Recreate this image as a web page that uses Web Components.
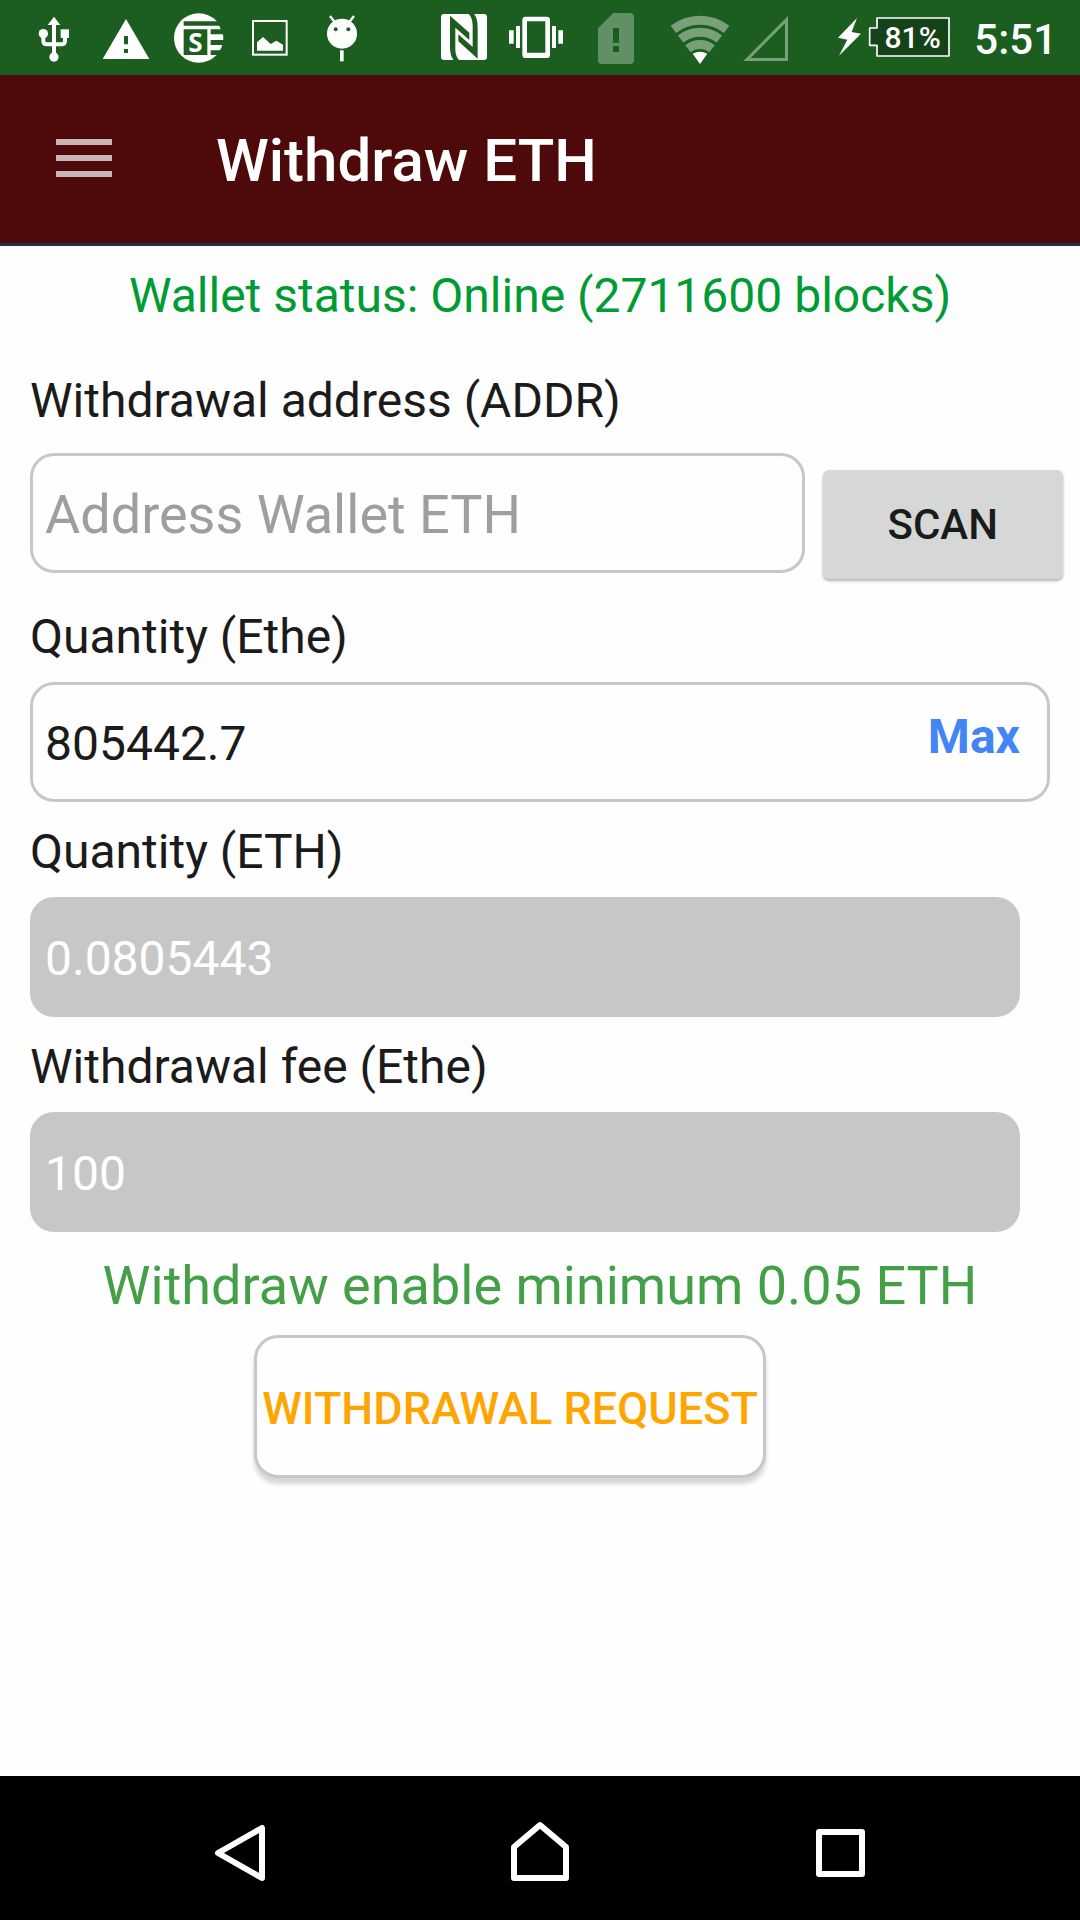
<!DOCTYPE html>
<html lang="en">
<head>
<meta charset="utf-8">
<meta name="viewport" content="width=device-width, initial-scale=1">
<title>Withdraw ETH</title>
<style>
  body {
    margin: 0;
    font-family: Roboto, "Liberation Sans", sans-serif;
    color: #1b1b1b;
    background: #fefefe;
  }
</style>
</head>
<body>
<withdraw-screen></withdraw-screen>

<script>
const GREEN = '#1b5e20';

// status bar glyphs, drawn at three units per pixel; w is the slot width in pixels
const ICONS = {
  usb: {w: 72, body: `
    <path d="M108 50L127 75H89Z"/><circle cx="108" cy="171" r="14"/><circle cx="76" cy="101" r="14"/>
    <rect x="128" y="88" width="25" height="26"/>
    <path d="M108 70V165M76 101V122Q76 133 87 133H130Q141 133 141 122V110" fill="none" stroke="#fff" stroke-width="12"/>`},
  warning: {w: 72, body: `
    <path d="M108 57L178 177H38Z"/>
    <path d="M102 108h12v25h-12zM102 147h12v12h-12z" fill="${GREEN}"/>`},
  news: {w: 72, body: `
    <circle cx="110" cy="114" r="74"/>
    <path d="M65 64H190V77H65ZM65 88H136V165H65ZM146 88H190V103H146ZM146 120H190V135H146ZM146 151H190V165H146ZM172 77H190V88H176Z" fill="${GREEN}"/>
    <text x="100" y="155" font-family="Noto Sans, sans-serif" font-weight="700" font-size="78" text-anchor="middle">S</text>`},
  image: {w: 72, body: `
    <rect x="57" y="63" width="101" height="101" fill="none" stroke="#fff" stroke-width="6"/>
    <path d="M69 127L87 111L110 132L127 122L147 134V152H69Z"/>`},
  android: {w: 72, body: `
    <circle cx="108" cy="101" r="45"/><rect x="102" y="151" width="11" height="33"/>
    <path d="M72 48L86 66M144 48L130 66" stroke="#fff" stroke-width="7"/>
    <g fill="${GREEN}"><circle cx="89" cy="88" r="6"/><circle cx="127" cy="88" r="6"/></g>`},
  nfc: {w: 72, body: `
    <rect x="39" y="42" width="138" height="138" rx="9"/>
    <path d="M66 47L124 98V120L82 83V150Q83 170 93 180H77Q66 168 66 140ZM149 176L91 124V103L134 141V75Q133 52 122 42H138Q149 52 149 85Z" fill="${GREEN}"/>`},
  vibrate: {w: 80, body: `
    <path fill-rule="evenodd" d="M77 50H140Q150 50 150 60V164Q150 174 140 174H77Q67 174 67 164V60Q67 50 77 50ZM81 64V158H136V64Z"/>
    <path d="M48 78h12v66h-12zM27 91h14v40h-14zM156 78h12v66h-12zM175 91h14v40h-14z"/>`},
  sim: {w: 84, body: `
    <path fill="#619066" fill-rule="evenodd" d="M100 39H150Q162 39 162 51V180Q162 192 150 192H66Q54 192 54 180V85ZM99 84V128H117V84ZM99 138V156H117V138Z"/>`},
  wifi: {w: 72, body: `
    <g fill="none" stroke="#799f7b" stroke-width="27">
      <path d="M28 88A131 131 0 0 1 188 88M50 117A94 94 0 0 1 166 117M72 146A58 58 0 0 1 144 146"/>
    </g>
    <path d="M108 192L86 161Q108 149 130 161Z"/>`},
  signal: {w: 96, body: `
    <path fill="#799f7b" fill-rule="evenodd" d="M156 48V183H22ZM147 70L44 174H147Z"/>`},
  bolt: {w: 36, body: '<path d="M75 54L18 113L46 119L21 167L87 101L59 96Z"/>'},
  battery: {w: 106, body: `
    <path d="M27 54H243V168H27V136H5V84H27Z" fill="#164219" stroke="#fff" stroke-width="5" stroke-linejoin="round"/>
    <text x="134" y="143" font-family="Roboto, sans-serif" font-weight="500" font-size="90" text-anchor="middle">81%</text>`}
};

/**
 * @class StatusIcon
 */
class StatusIcon extends HTMLElement {
  connectedCallback () {
    const icon = ICONS[this.getAttribute('name')];
    const shadow = this.shadowRoot || this.attachShadow({mode: 'open'});
    shadow.innerHTML = `
      <style>
        :host { display: block; flex: none; }
        svg { display: block; fill: #fff; }
      </style>
      <svg width="${icon.w}" height="75" viewBox="0 0 ${icon.w * 3} 225">${icon.body}</svg>
    `;
  }
}
customElements.define('status-icon', StatusIcon);

/**
 * @class StatusBar
 */
class StatusBar extends HTMLElement {
  constructor () {
    super();
    this.attachShadow({mode: 'open'}).innerHTML = `
      <style>
        :host {
          display: flex;
          justify-content: space-between;
          padding: 0 23px 0 18px;
          background: ${GREEN};
          color: #fff;
        }
        div { display: flex; align-items: center; }
        time { padding-top: 4px; font-size: 42px; font-weight: 500; line-height: 50px; }
      </style>
      <div>
        <status-icon name="usb"></status-icon>
        <status-icon name="warning"></status-icon>
        <status-icon name="news"></status-icon>
        <status-icon name="image"></status-icon>
        <status-icon name="android"></status-icon>
      </div>
      <div>
        <status-icon name="nfc"></status-icon>
        <status-icon name="vibrate"></status-icon>
        <status-icon name="sim"></status-icon>
        <status-icon name="wifi"></status-icon>
        <status-icon name="signal"></status-icon>
        <status-icon name="bolt"></status-icon>
        <status-icon name="battery"></status-icon>
        <time>5:51</time>
      </div>
    `;
  }
}
customElements.define('status-bar', StatusBar);

/**
 * @class AppBar
 */
class AppBar extends HTMLElement {
  constructor () {
    super();
    this.attachShadow({mode: 'open'}).innerHTML = `
      <style>
        :host {
          display: flex;
          align-items: center;
          gap: 80px;
          padding: 44px 32px 46px;
          background: #4e0a0a;
          border-bottom: 3px solid #1f2f3f;
          color: #fff;
        }
        button {
          display: block;
          padding: 0 24px;
          border: 0;
          background: none;
          cursor: pointer;
        }
        svg { display: block; fill: #c9b5b5; }
        h1 { margin: 0; padding-top: 6px; font-size: 60px; font-weight: 500; line-height: 72px; }
      </style>
      <button type="button" aria-label="Open menu">
        <svg width="56" height="38" viewBox="0 0 56 38"><path d="M0 0h56v6H0zM0 16h56v6H0zM0 32h56v6H0z"/></svg>
      </button>
      <h1><slot></slot></h1>
    `;
  }
}
customElements.define('app-bar', AppBar);

/**
 * Labelled text box, the slot takes an action shown inside the frame
 * @class WalletField
 */
class WalletField extends HTMLElement {
  constructor () {
    super();
    this.attachShadow({mode: 'open'}).innerHTML = `
      <style>
        :host { display: block; }
        label {
          display: block;
          margin-bottom: var(--label-gap, 17px);
          font-size: 48px;
          line-height: 56px;
        }
        .frame {
          display: flex;
          align-items: center;
          padding: 0 27px 0 12px;
          border: 3px solid #c7c7c7;
          border-radius: 24px;
        }
        input {
          flex: 1;
          min-width: 0;
          height: 64px;
          padding: 27px 0 23px;
          border: 0;
          outline: 0;
          background: none;
          font-family: inherit;
          font-size: var(--field-size, 48px);
          line-height: 64px;
          color: inherit;
        }
        input::placeholder { color: #9e9e9e; opacity: 1; }
        :host([disabled]) .frame { background: #c7c7c7; }
        input:disabled { color: #fff; }
      </style>
      <label for="box"></label>
      <div class="frame">
        <input id="box" type="text">
        <slot></slot>
      </div>
    `;
    this.$label = this.shadowRoot.querySelector('label');
    this.$input = this.shadowRoot.querySelector('input');
  }
  connectedCallback () {
    this.$label.textContent = this.getAttribute('label');
    this.$input.value = this.getAttribute('value') || '';
    this.$input.placeholder = this.getAttribute('placeholder') || '';
    this.$input.disabled = this.hasAttribute('disabled');
  }
}
customElements.define('wallet-field', WalletField);

/**
 * @class WalletButton
 */
class WalletButton extends HTMLElement {
  constructor () {
    super();
    this.attachShadow({mode: 'open'}).innerHTML = `
      <style>
        :host { display: block; }
        button {
          display: block;
          border: 0;
          background: none;
          font-family: inherit;
          font-weight: 500;
          color: inherit;
          cursor: pointer;
        }
        :host([kind="raised"]) button {
          padding: 30px 65px 29px;
          border-radius: 6px;
          background: #d6d8d7;
          box-shadow: 0 2px 3px rgba(0, 0, 0, .3);
          font-size: 42px;
          line-height: 50px;
        }
        :host([kind="outlined"]) button {
          padding: 46px 5px 41px;
          border: 3px solid #c7c7c7;
          border-radius: 24px;
          background: #fefefe;
          box-shadow: 0 6px 4px rgba(0, 0, 0, .16);
          font-size: 45px;
          line-height: 50px;
          color: #ffa500;
        }
        :host([kind="text"]) button {
          padding: 0 0 10px;
          font-size: 48px;
          font-weight: 700;
          line-height: 56px;
          color: #4285f4;
        }
      </style>
      <button type="button"><slot></slot></button>
    `;
  }
}
customElements.define('wallet-button', WalletButton);

/**
 * @class NavBar
 */
class NavBar extends HTMLElement {
  constructor () {
    super();
    this.attachShadow({mode: 'open'}).innerHTML = `
      <style>
        :host { display: flex; padding: 0 90px; background: #000; }
        button {
          flex: 1;
          display: flex;
          justify-content: center;
          padding: 36px 0;
          border: 0;
          background: none;
          cursor: pointer;
        }
        svg { fill: none; stroke: #fff; stroke-width: 6; stroke-linejoin: round; }
      </style>
      <button type="button" aria-label="Back">
        <svg width="72" height="72" viewBox="0 0 72 72"><path d="M58 16V66L14 41Z"/></svg>
      </button>
      <button type="button" aria-label="Home">
        <svg width="72" height="72" viewBox="0 0 72 72"><path d="M10 66V35L36 13L62 35V66Z"/></svg>
      </button>
      <button type="button" aria-label="Recent apps">
        <svg width="72" height="72" viewBox="0 0 72 72"><path d="M15 20H58V62H15Z"/></svg>
      </button>
    `;
  }
}
customElements.define('nav-bar', NavBar);

/**
 * @class WithdrawScreen
 */
class WithdrawScreen extends HTMLElement {
  constructor () {
    super();
    this.attachShadow({mode: 'open'}).innerHTML = `
      <style>
        :host { display: flex; flex-direction: column; min-height: 100vh; }
        main { flex: 1; padding: 22px 0; }
        p { margin: 0; text-align: center; }
        .status { margin-bottom: 49px; font-size: 48px; line-height: 56px; color: #009b33; }
        .notice { margin-bottom: 17px; font-size: 54px; line-height: 64px; color: #43a047; }
        .address {
          display: flex;
          align-items: flex-end;
          gap: 18px;
          margin: 0 17px 30px 30px;
        }
        .address wallet-field {
          flex: 1;
          padding-bottom: 6px;
          --label-gap: 24px;
          --field-size: 54px;
        }
        main > wallet-field { margin: 0 30px 22px; }
        main > wallet-field[disabled] { margin-right: 60px; }
        .submit { display: flex; justify-content: center; padding-right: 60px; }
      </style>
      <status-bar></status-bar>
      <app-bar>Withdraw ETH</app-bar>
      <main>
        <p class="status">Wallet status: Online (2711600 blocks)</p>
        <div class="address">
          <wallet-field label="Withdrawal address (ADDR)" placeholder="Address Wallet ETH"></wallet-field>
          <wallet-button kind="raised">SCAN</wallet-button>
        </div>
        <wallet-field label="Quantity (Ethe)" value="805442.7">
          <wallet-button kind="text">Max</wallet-button>
        </wallet-field>
        <wallet-field label="Quantity (ETH)" value="0.0805443" disabled></wallet-field>
        <wallet-field label="Withdrawal fee (Ethe)" value="100" disabled></wallet-field>
        <p class="notice">Withdraw enable minimum 0.05 ETH</p>
        <div class="submit">
          <wallet-button kind="outlined">WITHDRAWAL REQUEST</wallet-button>
        </div>
      </main>
      <nav-bar></nav-bar>
    `;
  }
}
customElements.define('withdraw-screen', WithdrawScreen);
</script>
</body>
</html>
